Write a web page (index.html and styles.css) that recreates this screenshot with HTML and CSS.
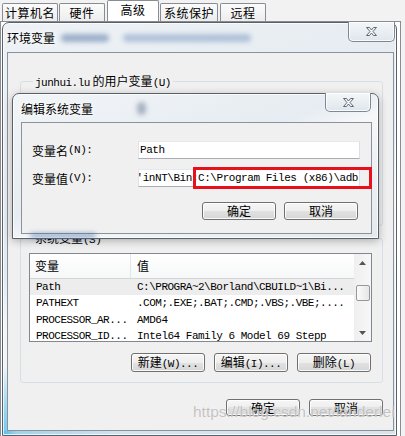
FILE: index.html
```html
<!DOCTYPE html>
<html lang="zh-CN">
<head>
<meta charset="utf-8">
<title>环境变量</title>
<link rel="stylesheet" href="styles.css">
</head>
<body>
<div class="desk">
  <div class="tabs">
    <div class="tab t1">计算机名</div>
    <div class="tab t2">硬件</div>
    <div class="tab sel">高级</div>
    <div class="tab t4">系统保护</div>
    <div class="tab t5">远程</div>
  </div>
  <div class="panel"></div>

  <section class="win env">
    <div class="titlebar">
      <span class="title">环境变量</span>
      <span class="smudge s1"></span>
      <span class="smudge s2"></span>
    </div>
    <div class="close env-close"><svg width="13" height="11" viewBox="0 0 13 11"><path d="M1.5 1.5h3l2 2.5 2-2.5h3l-3.5 4 3.5 4h-3l-2-2.5-2 2.5h-3l3.5-4z" fill="#f4f6f8" stroke="#5e6a76" stroke-width="1" stroke-linejoin="round"/></svg></div>
    <div class="client env-client">
      <fieldset class="group user">
        <legend><span class="mono">junhui.lu</span> 的用户变量<span class="mono">(U)</span></legend>
      </fieldset>
      <fieldset class="group sys">
        <legend>系统变量<span class="mono">(S)</span></legend>
        <div class="list">
          <div class="list-main">
            <div class="lhead"><div class="c1">变量</div><div class="c2">值</div></div>
            <div class="row selrow"><div class="c1 mono">Path</div><div class="c2 mono">C:\PROGRA~2\Borland\CBUILD~1\Bi...</div></div>
            <div class="row"><div class="c1 mono">PATHEXT</div><div class="c2 mono">.COM;.EXE;.BAT;.CMD;.VBS;.VBE;....</div></div>
            <div class="row"><div class="c1 mono">PROCESSOR_AR...</div><div class="c2 mono">AMD64</div></div>
            <div class="row"><div class="c1 mono">PROCESSOR_ID...</div><div class="c2 mono">Intel64 Family 6 Model 69 Stepp</div></div>
          </div>
          <div class="vscroll">
            <div class="arrow"><svg width="7" height="4" viewBox="0 0 7 4"><path d="M0 4L3.5 0 7 4z" fill="#555"/></svg></div>
            <div class="track"><div class="thumb"></div></div>
            <div class="arrow"><svg width="7" height="4" viewBox="0 0 7 4"><path d="M0 0L3.5 4 7 0z" fill="#555"/></svg></div>
          </div>
        </div>
        <div class="btnrow listbtns">
          <button class="btn">新建<span class="mono">(W)...</span></button>
          <button class="btn">编辑<span class="mono">(I)...</span></button>
          <button class="btn">删除<span class="mono">(L)</span></button>
        </div>
      </fieldset>
      <div class="btnrow bottombtns">
        <button class="btn">确定</button>
        <button class="btn">取消</button>
      </div>
    </div>
  </section>

  <section class="win edit">
    <div class="titlebar">
      <span class="title">编辑系统变量</span>
      <span class="smudge s3"></span>
    </div>
    <div class="close edit-close"><svg width="13" height="11" viewBox="0 0 13 11"><path d="M1.5 1.5h3l2 2.5 2-2.5h3l-3.5 4 3.5 4h-3l-2-2.5-2 2.5h-3l3.5-4z" fill="#f4f6f8" stroke="#5e6a76" stroke-width="1" stroke-linejoin="round"/></svg></div>
    <div class="client edit-client">
      <div class="form">
        <label class="flabel">变量名<span class="mono">(N):</span></label>
        <div class="field mono">Path</div>
        <label class="flabel">变量值<span class="mono">(V):</span></label>
        <div class="field mono scrolled"><span>'inNT\Bin;C:\Program Files (x86)\adb</span></div>
      </div>
      <div class="btnrow editbtns">
        <button class="btn">确定</button>
        <button class="btn">取消</button>
      </div>
    </div>
    <div class="redbox"></div>
    <span class="smudge s4"></span>
  </section>

  <div class="watermark">https://blog.csdn.net/landerlei</div>
</div>
</body>
</html>
```

FILE: styles.css
```css
* { box-sizing: border-box; }
html, body { margin: 0; padding: 0; }
body {
  width: 405px;
  height: 436px;
  overflow: hidden;
  background: #f2f2f2;
  font-family: "Noto Sans CJK SC", "Liberation Sans", sans-serif;
  font-size: 12px;
  color: #000;
}
.desk { position: relative; width: 405px; height: 436px; }
.mono {
  font-family: "Liberation Mono", "DejaVu Sans Mono", monospace;
  font-size: 11px;
  letter-spacing: -0.5px;
}

/* background window tabs */
.tabs { display: flex; align-items: flex-end; height: 22px; }
.tab {
  height: 19px;
  border: 1px solid #898c95;
  border-bottom: none;
  border-radius: 2px 2px 0 0;
  background: linear-gradient(#fbfbfb, #ececec);
  font-size: 12px;
  letter-spacing: 0.5px;
  line-height: 18px;
  text-align: center;
}
.t1 { width: 56px; margin-left: 2px; }
.t2 { width: 46px; margin-left: 1px; }
.sel { width: 52px; height: 22px; margin-left: 2px; background: #fff; line-height: 17px; }
.t4 { width: 58px; margin-left: 1px; }
.t5 { width: 46px; margin-left: 2px; }
.panel {
  position: absolute;
  left: 0; top: 21px;
  width: 401px; height: 420px;
  border: 1px solid #898c95;
  background: #fff;
}

/* aero windows */
.win {
  position: absolute;
  display: flex;
  flex-direction: column;
  border: 1px solid #58606a;
  border-radius: 7px 7px 0 0;
  background:
    radial-gradient(ellipse 14px 70px at 0 100%, rgba(70,190,235,.85), rgba(70,190,235,0) 100%),
    linear-gradient(160deg, #eef2f6 0%, #e2e9ef 45%, #f3f6f9 55%, #dfe6ec 100%);
  box-shadow: inset 0 0 0 1px rgba(255,255,255,.75);
}
.env {
  left: 2px; top: 22px; width: 395px; height: 414px; padding: 0 2px 4px 4px;
  background:
    radial-gradient(ellipse 14px 70px at 0 100%, rgba(70,190,235,.85), rgba(70,190,235,0) 100%),
    linear-gradient(to right, rgba(90,180,225,.55), rgba(150,200,230,.25) 30%, rgba(200,215,230,.15)) bottom / 100% 4px no-repeat,
    linear-gradient(160deg, #eef2f6 0%, #e2e9ef 45%, #f3f6f9 55%, #dfe6ec 100%);
}
.edit {
  left: 12px; top: 93px; width: 367px; height: 146px; padding: 0 6px 4px 8px;
  background: linear-gradient(160deg, #f2f5f8 0%, #e6ecf1 45%, #f5f7f9 55%, #e3e9ee 100%);
  box-shadow: inset 0 0 0 1px rgba(255,255,255,.75), 0 2px 8px rgba(0,0,0,.28);
}
.titlebar {
  display: flex;
  align-items: center;
  flex: none;
}
.env .titlebar { height: 29px; }
.edit .titlebar { height: 28px; }
.title {
  font-size: 12px;
  text-shadow: 0 0 6px #fff, 0 0 3px #fff;
}
.smudge {
  display: block;
  border-radius: 6px;
  filter: blur(2.5px);
}
.s1 { width: 48px; height: 8px; margin-left: 6px; background: rgba(60,95,150,.45); }
.s2 { width: 128px; height: 8px; margin-left: 14px; background: rgba(70,110,170,.35); }
.s3 { width: 9px; height: 13px; margin-left: 44px; background: rgba(80,100,130,.45); }
.s4 {
  position: absolute; left: 17px; bottom: 0;
  width: 66px; height: 5px;
  background: rgba(60,100,160,.5);
}
.close {
  position: absolute;
  top: -1px;
  display: flex;
  align-items: center;
  justify-content: center;
  border: 1px solid #7d8894;
  border-top: none;
  border-radius: 0 0 5px 5px;
  background: linear-gradient(#f4f7f9, #dfe6ec);
  box-shadow: inset 0 0 0 1px rgba(255,255,255,.8);
}
.env-close { right: 1px; width: 47px; height: 20px; }
.edit-close { right: 7px; width: 46px; height: 19px; }

.client {
  flex: 1;
  border: 1px solid #8a939b;
  background: #f0f0f0;
}
.env-client {
  display: flex;
  flex-direction: column;
  padding: 21px 10px 0 12px;
}

/* group boxes */
.group {
  margin: 0;
  padding: 0 10px 10px 8px;
  min-width: 0;
  border: 1px solid #d5dfe5;
  border-radius: 3px;
}
.group legend {
  margin-left: 4px;
  padding: 0 2px;
  height: 14px;
  line-height: 14px;
  font-size: 12px;
}
.user { height: 152px; }
.sys { height: 152px; margin-top: 5px; }

/* list view */
.list {
  display: flex;
  margin-top: 8px;
  height: 89px;
  border: 1px solid #828790;
  background: #fff;
}
.list-main { flex: 1; overflow: hidden; }
.lhead {
  display: flex;
  height: 25px;
  border-bottom: 1px solid #d5d5d5;
  background: linear-gradient(#ffffff, #f6f7f8);
  line-height: 24px;
}
.lhead .c1 { border-right: 1px solid #e3e6e8; }
.c1 { width: 101px; padding-left: 5px; flex: none; white-space: nowrap; }
.c2 { padding-left: 6px; white-space: nowrap; }
.row { display: flex; height: 16.4px; line-height: 16.4px; }
.row .c1 { padding-left: 6px; }
.selrow { background: #ededed; }
.vscroll {
  width: 17px;
  display: flex;
  flex-direction: column;
  background: linear-gradient(to right, #efefef, #f7f7f7);
}
.arrow {
  height: 17px;
  display: flex;
  align-items: center;
  justify-content: center;
  flex: none;
}
.track { flex: 1; padding: 14px 1px 0 2px; }
.thumb {
  height: 16px;
  border: 1px solid #979797;
  border-radius: 2px;
  background: linear-gradient(to right, #fbfbfb, #e6e6e6);
}

/* buttons */
.btnrow { display: flex; justify-content: flex-end; }
.btn {
  width: 74px;
  margin: 0;
  padding: 0;
  border: 1px solid #707070;
  border-radius: 3px;
  background: linear-gradient(#f6f6f6 0%, #eeeeee 50%, #e2e2e2 50%, #d6d6d6 100%);
  box-shadow: inset 0 0 0 1px rgba(255,255,255,.85);
  font-family: "Noto Sans CJK SC", "Liberation Sans", sans-serif;
  font-size: 12px;
  color: #000;
  line-height: 1;
  white-space: nowrap;
}
.listbtns { margin-top: 11px; gap: 9px; padding-right: 1px; }
.listbtns .btn { height: 19px; width: 74px; }
.bottombtns { margin-top: 16px; gap: 9px; }
.bottombtns .btn { height: 17px; }

/* edit dialog */
.edit-client {
  display: flex;
  flex-direction: column;
  padding: 18px 13px 0 10px;
}
.form {
  display: grid;
  grid-template-columns: 106px 222px;
  grid-auto-rows: 18px;
  row-gap: 10px;
}
.flabel { display: flex; align-items: center; font-size: 12px; }
.field {
  border: 1px solid #abadb3;
  border-top-color: #e3e9ef;
  border-left-color: #e2e3ea;
  border-right-color: #dbdfe6;
  background: #fff;
  padding-left: 1px;
  line-height: 16px;
  white-space: nowrap;
  overflow: hidden;
  letter-spacing: -0.45px;
}
.scrolled {
  display: flex;
  justify-content: flex-end;
  padding-left: 0;
  padding-right: 1px;
}
.scrolled span { flex: none; }
.editbtns { margin-top: 15px; gap: 8px; }
.editbtns .btn { height: 18px; }
.redbox {
  position: absolute;
  left: 180px; top: 73px;
  width: 179px; height: 22px;
  border: 3px solid #e8101a;
}

.watermark {
  position: absolute;
  left: 193px; top: 403px;
  width: 204px;
  overflow: hidden;
  white-space: nowrap;
  font-family: "Liberation Sans", Arial, sans-serif;
  font-size: 15.5px;
  color: rgba(175,175,175,.75);
  text-shadow: 0 0 1px rgba(255,255,255,.9);
}
```
